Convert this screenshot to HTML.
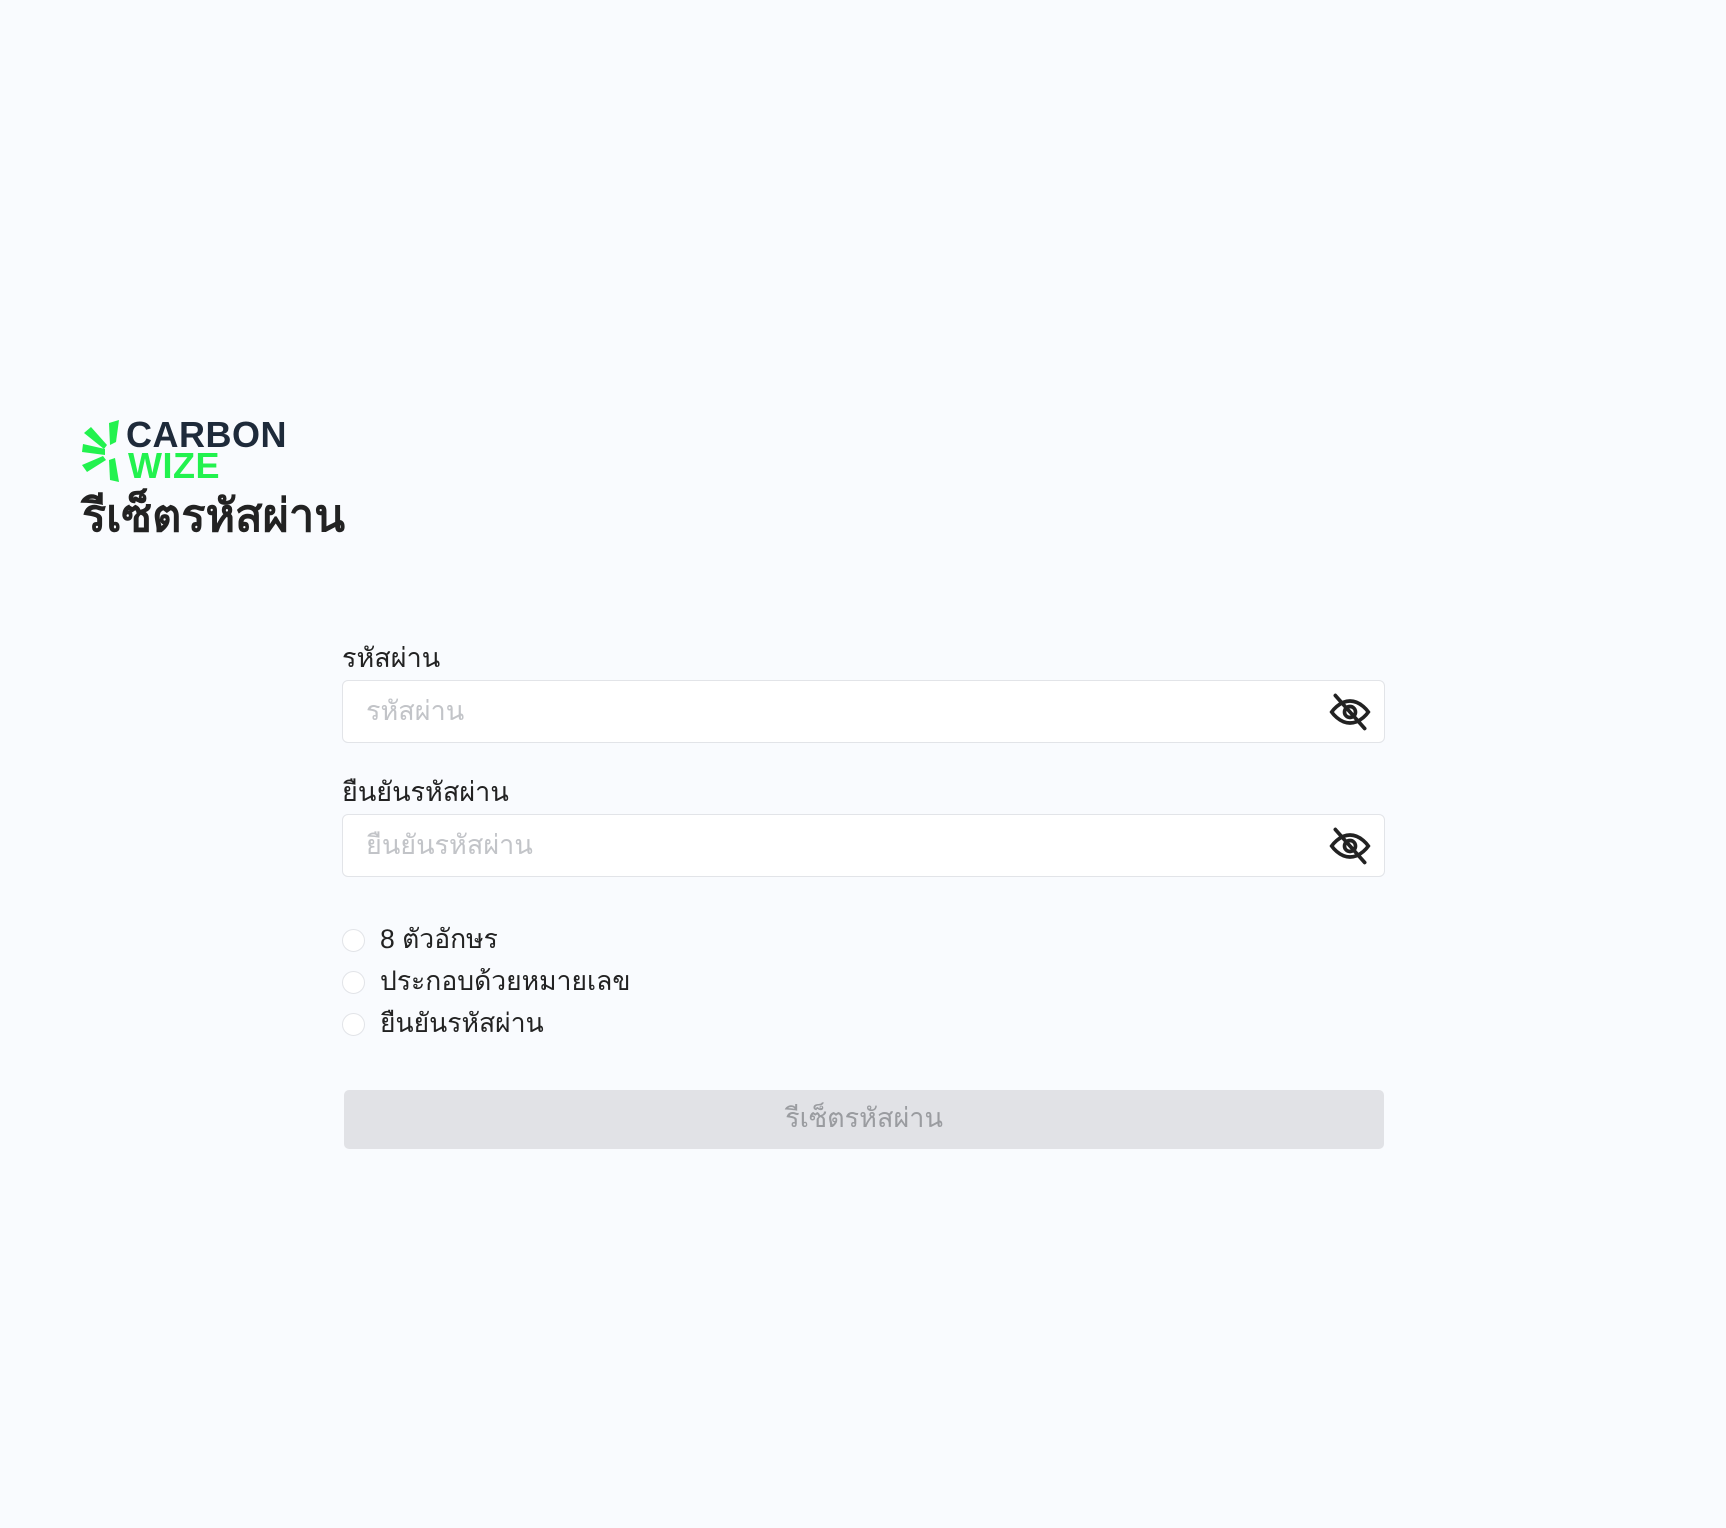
<!DOCTYPE html>
<html><head><meta charset="utf-8"><style>
body{margin:0;width:1726px;height:1528px;background:#f9fbfe;font-family:"Liberation Sans","Noto Sans CJK SC",sans-serif;color:#222;position:relative;overflow:hidden}
.abs{position:absolute}
.lbl{font-size:27px;color:#222}
.inp{position:absolute;left:342px;width:1041px;height:61px;border:1px solid #e2e4e8;border-radius:6px;background:#fff}
.inp span{position:absolute;left:23px;top:8px;font-size:27px;color:#c2c4c8}
.inp svg{position:absolute;right:11px;top:9px}
.chk{position:absolute;left:342px;font-size:26.5px;color:#222}
.chk i{position:absolute;left:0;top:7px;width:21px;height:21px;border:1px solid #e2e4e8;border-radius:50%;background:#fff}
.chk b{font-weight:normal;position:absolute;left:38px;top:-4px;white-space:nowrap}
</style></head><body>
<svg class="abs" style="left:82px;top:420px" width="40" height="64" viewBox="0 0 40 64">
<g fill="#22f24e">
<path d="M27 3 L37 0 L34 22 L28 25 Z"/>
<path d="M2 13 L9 7 L25 25 L22 29 Z"/>
<path d="M0 32 L1 24 L23 29 L23 35 Z"/>
<path d="M5 52 L0 45 L21 36 L24 40 Z"/>
<path d="M27 40 L33 38 L37 62 L28 60 Z"/>
</g></svg>
<div class="abs" style="left:126px;top:417px;font-size:36px;font-weight:bold;color:#1e2a3a;letter-spacing:0.5px;line-height:36px">CARBON</div>
<div class="abs" style="left:128px;top:448px;font-size:36px;font-weight:bold;color:#22f24e;letter-spacing:0.5px;line-height:36px">WIZE</div>
<div class="abs" style="left:82px;top:479px;font-size:45px;font-weight:bold;color:#222">รีเซ็ตรหัสผ่าน</div>

<div class="abs lbl" style="left:342px;top:636px">รหัสผ่าน</div>
<div class="inp" style="top:680px"><span>รหัสผ่าน</span>
<svg width="46" height="44" viewBox="0 0 24 24" fill="none" stroke="#222" stroke-width="2" stroke-linecap="round"><path d="M2 12s4-6 10-6 10 6 10 6-4 6-10 6S2 12 2 12z"/><circle cx="12" cy="12" r="3"/><path d="M4 3l16 18"/></svg></div>
<div class="abs lbl" style="left:342px;top:770px">ยืนยันรหัสผ่าน</div>
<div class="inp" style="top:814px"><span>ยืนยันรหัสผ่าน</span>
<svg width="46" height="44" viewBox="0 0 24 24" fill="none" stroke="#222" stroke-width="2" stroke-linecap="round"><path d="M2 12s4-6 10-6 10 6 10 6-4 6-10 6S2 12 2 12z"/><circle cx="12" cy="12" r="3"/><path d="M4 3l16 18"/></svg></div>

<div class="chk" style="top:922px"><i></i><b>8 ตัวอักษร</b></div>
<div class="chk" style="top:964px"><i></i><b>ประกอบด้วยหมายเลข</b></div>
<div class="chk" style="top:1006px"><i></i><b>ยืนยันรหัสผ่าน</b></div>

<div class="abs" style="left:344px;top:1090px;width:1040px;height:59px;background:#e1e2e6;border-radius:5px;text-align:center;line-height:57px;font-size:27px;color:#9a9ca0">รีเซ็ตรหัสผ่าน</div>
</body></html>
